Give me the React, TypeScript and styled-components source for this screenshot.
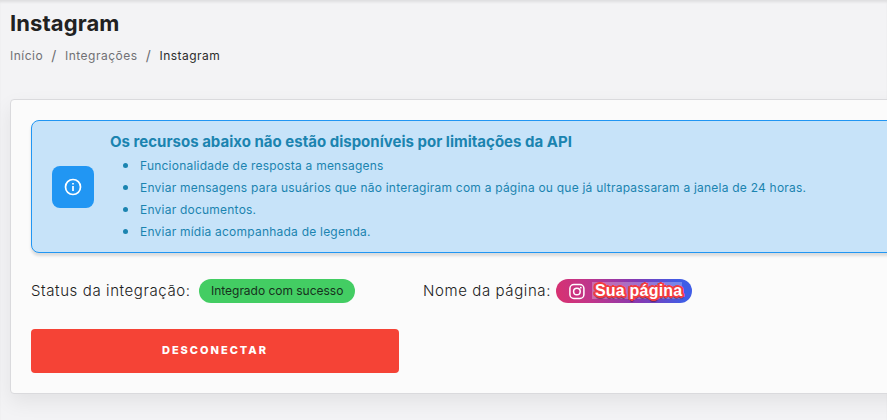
import React from "react";
import styled, { createGlobalStyle } from "styled-components";

const GlobalStyle = createGlobalStyle`
  *, *::before, *::after { box-sizing: border-box; }
  html, body { margin: 0; padding: 0; background: #f3f3f5; }
  body { overflow: hidden; font-family: Inter, "Liberation Sans", sans-serif; color: #212121; }
  h1, h2, ul, p { margin: 0; padding: 0; }
`;

const Page = styled.main`
  height: 420px;
  padding: 10px 0 0 10px;
  overflow: hidden;
  background: #f3f3f5;
  box-shadow: inset 0 3px 3px -1px rgba(0, 0, 0, 0.09);
`;

const Title = styled.h1`
  height: 26px;
  line-height: 26px;
  font-size: 22px;
  font-weight: 700;
  letter-spacing: 0.1px;
`;

const Breadcrumb = styled.nav`
  display: flex;
  align-items: center;
  height: 20px;
  margin-top: 9px;
  font-size: 12px;
  letter-spacing: 0.48px;
  color: #6c6c70;
`;

const Crumb = styled.span<{ $current?: boolean }>`
  color: ${({ $current }) => ($current ? "#2c2c2c" : "#707074")};
`;

const Separator = styled.span`
  width: 22px;
  text-align: center;
  font-size: 14px;
`;

const Card = styled.section`
  width: 1000px;
  height: 295px;
  margin-top: 34px;
  padding: 20px;
  border: 1px solid #dadadd;
  border-radius: 4px;
  background: #fbfbfb;
  box-shadow: 0 8px 20px rgba(0, 0, 0, 0.07);
`;

const Alert = styled.div`
  display: flex;
  align-items: center;
  height: 133px;
  padding: 0 20px;
  border: 1px solid #2196f3;
  border-radius: 8px;
  background: #c7e3f9;
  box-shadow: 0 3px 3px rgba(0, 0, 0, 0.13);
  color: #1b84b0;
`;

const AlertIcon = styled.div`
  display: grid;
  place-items: center;
  width: 42px;
  height: 42px;
  border-radius: 8px;
  background: #2196f3;
`;

const AlertBody = styled.div`
  margin-left: 16px;
`;

const AlertTitle = styled.h2`
  height: 24px;
  line-height: 22px;
  font-size: 15px;
  font-weight: 700;
  letter-spacing: 0.01px;
`;

const Limitations = styled.ul`
  list-style: none;
`;

const Limitation = styled.li`
  display: flex;
  align-items: center;
  height: 22px;
  padding-left: 13px;
  font-size: 12px;
  letter-spacing: 0.222px;
  white-space: nowrap;

  &::before {
    content: "";
    width: 5px;
    height: 5px;
    margin-right: 12px;
    border-radius: 50%;
    background: currentColor;
  }
`;

const Details = styled.div`
  display: grid;
  grid-template-columns: 392px auto;
  margin-top: 26px;
`;

const Field = styled.div`
  display: flex;
  align-items: center;
  height: 24px;
`;

const Label = styled.span<{ $width: number }>`
  width: ${({ $width }) => $width}px;
  padding-bottom: 2px;
  font-size: 15px;
  font-weight: 350;
  letter-spacing: 0.6px;
  white-space: nowrap;
`;

const Badge = styled.span<{ $width: number; $instagram?: boolean }>`
  display: flex;
  align-items: center;
  width: ${({ $width }) => $width}px;
  height: 24px;
  padding-left: 12px;
  border-radius: 12px;
  font-size: 12px;
  letter-spacing: -0.02px;
  white-space: nowrap;
  color: #17301d;
  background: ${({ $instagram }) =>
    $instagram
      ? "linear-gradient(75deg, #d9316f 0%, #c1358a 25%, #833ab4 60%, #405de6 90%)"
      : "#43cd63"};
`;

const BadgeText = styled.span`
  padding-bottom: 1px;
`;

const PageName = styled.span`
  width: 90px;
  height: 17px;
  margin: 0 0 1px 7px;
  padding-left: 3px;
  background: rgba(255, 255, 255, 0.27);
  font: 700 16px/18px "Liberation Sans", Arial, sans-serif;
  letter-spacing: 0.2px;
  color: #fff;
  text-shadow:
    -1px -1px 0 #f23c3f, 1px -1px 0 #f23c3f,
    -1px 1px 0 #f23c3f, 1px 1px 0 #f23c3f,
    -2px 0 0 #f23c3f, 2px 0 0 #f23c3f,
    0 -2px 0 #f23c3f, 0 2px 0 #f23c3f,
    -2px -1px 0 #f23c3f, 2px -1px 0 #f23c3f,
    -2px 1px 0 #f23c3f, 2px 1px 0 #f23c3f,
    0 3px 1px rgba(80, 20, 50, 0.6),
    1px 2px 1px rgba(80, 20, 50, 0.5);
`;

const DisconnectButton = styled.button`
  display: block;
  width: 368px;
  height: 44px;
  margin-top: 26px;
  padding: 0 0 2px;
  border: 0;
  border-radius: 4px;
  background: #f54336;
  color: #fff;
  font-family: inherit;
  font-size: 11px;
  font-weight: 800;
  letter-spacing: 2px;
`;

const InfoIcon = () => (
  <svg width="18" height="18" viewBox="0 0 18 18" fill="none" stroke="#fff">
    <circle cx="9" cy="9" r="7.5" strokeWidth="1.7" />
    <path d="M9 8v5M9 5v1.6" strokeWidth="1.7" />
  </svg>
);

const InstagramIcon = () => (
  <svg width="17" height="17" viewBox="0 0 17 17" fill="none" stroke="#fff" strokeWidth="1.5">
    <rect x="1.9" y="1.5" width="14" height="14" rx="4" />
    <circle cx="8.9" cy="8.5" r="3.3" />
    <circle cx="12.8" cy="4.7" r="0.9" fill="#fff" stroke="none" />
  </svg>
);

const limitations = [
  "Funcionalidade de resposta a mensagens",
  "Enviar mensagens para usuários que não interagiram com a página ou que já ultrapassaram a janela de 24 horas.",
  "Enviar documentos.",
  "Enviar mídia acompanhada de legenda.",
];

export default function App() {
  return (
    <>
      <GlobalStyle />
      <Page>
        <Title>Instagram</Title>
        <Breadcrumb>
          <Crumb>Início</Crumb>
          <Separator>/</Separator>
          <Crumb>Integrações</Crumb>
          <Separator>/</Separator>
          <Crumb $current>Instagram</Crumb>
        </Breadcrumb>
        <Card>
          <Alert>
            <AlertIcon>
              <InfoIcon />
            </AlertIcon>
            <AlertBody>
              <AlertTitle>Os recursos abaixo não estão disponíveis por limitações da API</AlertTitle>
              <Limitations>
                {limitations.map((text) => (
                  <Limitation key={text}>{text}</Limitation>
                ))}
              </Limitations>
            </AlertBody>
          </Alert>
          <Details>
            <Field>
              <Label $width={168}>Status da integração:</Label>
              <Badge $width={156}>
                <BadgeText>Integrado com sucesso</BadgeText>
              </Badge>
            </Field>
            <Field>
              <Label $width={133}>Nome da página:</Label>
              <Badge $width={136} $instagram>
                <InstagramIcon />
                <PageName>Sua página</PageName>
              </Badge>
            </Field>
          </Details>
          <DisconnectButton>DESCONECTAR</DisconnectButton>
        </Card>
      </Page>
    </>
  );
}
